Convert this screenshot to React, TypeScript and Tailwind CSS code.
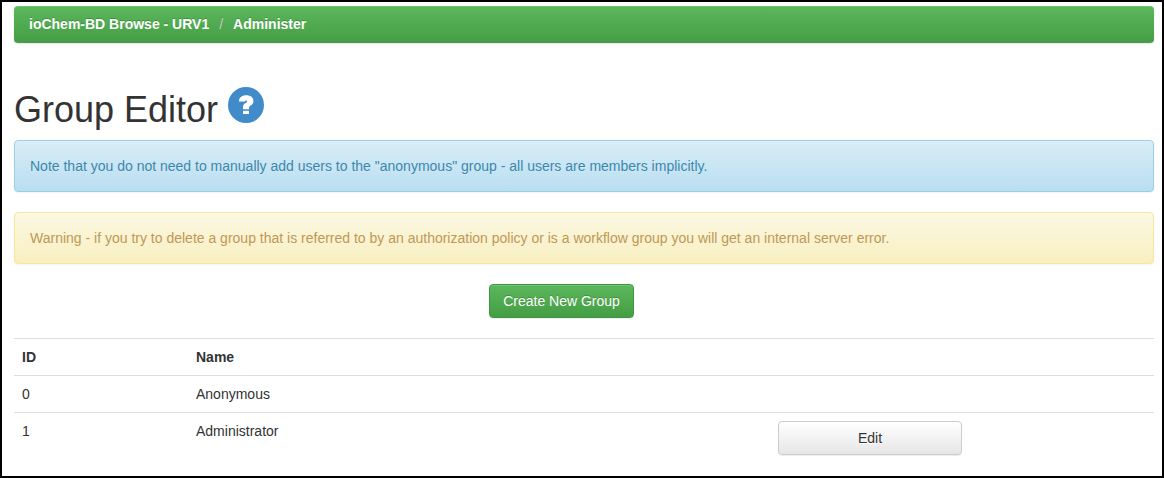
import React from "react";

type Group = { id: number; name: string; editable: boolean };

const groups: Group[] = [
  { id: 0, name: "Anonymous", editable: false },
  { id: 1, name: "Administrator", editable: true },
];

function Breadcrumb() {
  return (
    <nav
      aria-label="Breadcrumb"
      className="rounded bg-linear-to-b from-[#5cb85c] to-[#449d44] px-[15px] py-2 font-bold text-white shadow-[inset_0_1px_0_rgba(255,255,255,0.15),0_1px_2px_rgba(0,0,0,0.1)] [text-shadow:0_-1px_0_rgba(0,0,0,0.2)]"
    >
      <ol className="flex flex-wrap leading-[21px]">
        <li>
          <a href="#browse">ioChem-BD Browse - URV1</a>
        </li>
        <li aria-hidden="true" className="px-2.5 font-normal text-[#cccccc]">
          /
        </li>
        <li>
          <a href="#administer">Administer</a>
        </li>
      </ol>
    </nav>
  );
}

function HelpIcon() {
  return (
    <svg viewBox="0 0 36 36" className="size-9" aria-hidden="true">
      <circle cx="18" cy="18" r="18" fill="#428bca" />
      <path
        d="M11 14.4C11 10.6 13.8 8.3 18.2 8.3c4.3 0 7.2 2.1 7.2 5.6 0 2.3-.9 3.6-2.7 4.7-1.3.8-1.7 1.3-1.7 2.4v1.2h-6v-1.6c0-2.3.8-3.5 2.6-4.6 1.2-.7 1.6-1.1 1.6-1.8 0-.5-.4-.8-1-.8-.8 0-1.2.4-1.2 1z"
        fill="#fff"
      />
      <path d="M15 23.8h6V27h-6z" fill="#fff" />
    </svg>
  );
}

export default function App() {
  return (
    <div className="min-h-screen border-2 border-black bg-white pt-1 pr-2 pb-3 pl-3 font-['Liberation_Sans',Arial,sans-serif] text-sm leading-5 text-[#333333]">
      <Breadcrumb />
      <main>
        <header className="mt-11 mb-2.5 flex items-start gap-2.5">
          <h1 className="pt-[3px] text-4xl leading-10">Group Editor</h1>
          <a href="#help" aria-label="Help">
            <HelpIcon />
          </a>
        </header>

        <p className="mb-5 rounded border border-[#9acfea] bg-linear-to-b from-[#d9edf7] to-[#b9def0] p-[15px] text-[#3a87ad] shadow-[inset_0_1px_0_rgba(255,255,255,0.25),0_1px_2px_rgba(0,0,0,0.05)] [text-shadow:0_1px_0_rgba(255,255,255,0.2)]">
          Note that you do not need to manually add users to the "anonymous" group - all users are members implicitly.
        </p>
        <p className="mb-5 rounded border border-[#f5e79e] bg-linear-to-b from-[#fcf8e3] to-[#f8efc0] p-[15px] text-[#c09853] shadow-[inset_0_1px_0_rgba(255,255,255,0.25),0_1px_2px_rgba(0,0,0,0.05)] [text-shadow:0_1px_0_rgba(255,255,255,0.2)]">
          Warning - if you try to delete a group that is referred to by an authorization policy or is a workflow group you will get an internal server error.
        </p>

        <div className="mb-5 flex justify-center pr-[45px]">
          <button
            type="button"
            className="min-w-[145px] rounded border border-[#419641] bg-linear-to-b from-[#5cb85c] to-[#449d44] px-3 py-1.5 whitespace-nowrap text-white shadow-[inset_0_1px_0_rgba(255,255,255,0.15),0_1px_1px_rgba(0,0,0,0.075)] [text-shadow:0_-1px_0_rgba(0,0,0,0.2)]"
          >
            Create New Group
          </button>
        </div>

        <table className="w-full table-fixed text-left">
          <colgroup>
            <col className="w-[174px]" />
            <col />
            <col className="w-[200px]" />
            <col className="w-[184px]" />
          </colgroup>
          <thead>
            <tr className="border-t border-[#dddddd] align-top">
              <th scope="col" className="p-2">ID</th>
              <th scope="col" className="p-2">Name</th>
              <td className="p-2" />
              <td className="p-2" />
            </tr>
          </thead>
          <tbody>
            {groups.map((group) => (
              <tr key={group.id} className="border-t border-[#dddddd] align-top">
                <td className="p-2">{group.id}</td>
                <td className="p-2">{group.name}</td>
                <td className="p-2">
                  {group.editable && (
                    <button
                      type="button"
                      aria-label={`Edit ${group.name}`}
                      className="block w-full rounded border border-[#cccccc] bg-linear-to-b from-white to-[#e6e6e6] px-3 py-1.5 shadow-[inset_0_1px_0_rgba(255,255,255,0.15),0_1px_1px_rgba(0,0,0,0.075)] [text-shadow:0_1px_0_#fff]"
                    >
                      Edit
                    </button>
                  )}
                </td>
                <td className="p-2" />
              </tr>
            ))}
          </tbody>
        </table>
      </main>
    </div>
  );
}
